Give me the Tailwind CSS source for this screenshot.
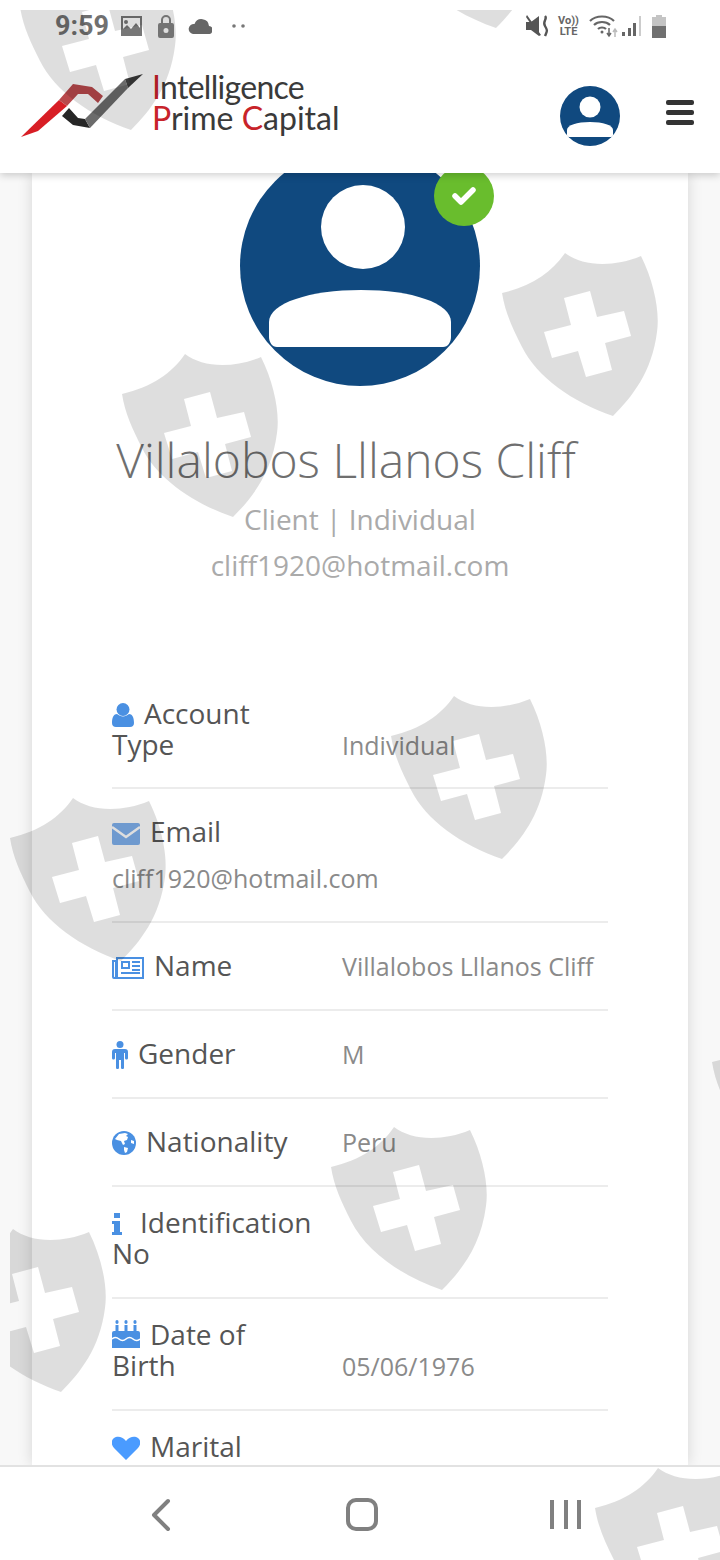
<!DOCTYPE html>
<html lang="en">
  <head>
    <meta charset="UTF-8" />
    <meta name="viewport" content="width=device-width, initial-scale=1.0" />
    <title>Profile</title>
    <script src="https://cdn.jsdelivr.net/npm/@tailwindcss/browser@4"></script>
  </head>
  <body class="bg-white font-['Open_Sans',sans-serif] antialiased">
    <div class="relative flex flex-col w-[720px] h-[1560px] overflow-hidden">
      <!-- Header -->
      <header class="relative z-10 h-[173px] shrink-0 bg-white shadow-[0_2px_8px_rgba(0,0,0,0.2)]">
        <!-- Status bar -->
        <div class="flex items-center h-[52px] pl-[55px] pr-[54px] text-[#707070]">
          <span class="w-[52px] text-[27px] font-bold font-['Roboto',sans-serif] leading-none">9:59</span>
          <svg class="ml-[14px]" width="21" height="20" viewBox="0 0 21 20" fill="#777777"><path fill-rule="evenodd" d="M0 0h21v20H0zM2 2v11l4-4 4 4 5-6 4 5V2zM5 4a2 2 0 1 1 0 4 2 2 0 0 1 0-4z"/></svg>
          <svg class="ml-[16px]" width="16" height="23" viewBox="0 0 16 23" fill="#858585"><path fill-rule="evenodd" d="M3 8V5a5 5 0 0 1 10 0v3h1a2 2 0 0 1 2 2v11a2 2 0 0 1-2 2H2a2 2 0 0 1-2-2V10a2 2 0 0 1 2-2zm2 0h6V5a3 3 0 0 0-6 0zm3 5a2.500 2.500 0 1 0 0 5 2.500 2.500 0 0 0 0-5z"/></svg>
          <svg class="ml-[14px]" width="24" height="15" viewBox="0 0 24 15" fill="#666666"><path d="M5 15h15a4 4 0 0 0 1-8A7.500 7.500 0 0 0 6.500 5 5 5 0 0 0 5 15z"/></svg>
          <svg class="ml-[20px]" width="13" height="4" viewBox="0 0 13 4" fill="#777777"><circle cx="2" cy="2" r="1.800"/><circle cx="11" cy="2" r="1.800"/></svg>
          <div class="ml-auto flex items-center">
            <svg width="24" height="24" viewBox="0 0 24 24" fill="#555555"><path d="M0 8h5l8-6v20l-8-6H0zM1 1l14 20-2 1L0 3z"/><path d="M19 2c3 3-3 5 0 10s2 5 0 10" fill="none" stroke="#555555" stroke-width="2.400"/></svg>
            <div class="ml-[7px] w-[23px] text-center text-[11px] leading-[11px] font-bold font-['Roboto',sans-serif] text-[#666666]">Vo))<br />LTE</div>
            <svg class="ml-[9px]" width="29" height="24" viewBox="0 0 29 24" fill="none" stroke="#666666" stroke-width="2.200"><path d="M1 7c6-6 18-6 24 0M5 11c4-4 12-4 16 0M9 15c2-2 6-2 8 0"/><circle cx="13" cy="18" r="1.500" fill="#666666" stroke="none"/><path d="M20 14v7m-2-2l2 3 2-3" stroke-width="1.500"/><path d="M26 23v-7m-2 2l2-3 2 3" stroke="#bbbbbb" stroke-width="1.500"/></svg>
            <svg class="ml-[4px]" width="20" height="22" viewBox="0 0 20 22"><rect x="0" y="17" width="3" height="4" fill="#666666"/><rect x="6" y="13" width="3" height="8" fill="#666666"/><rect x="11" y="8" width="3" height="13" fill="#666666"/><rect x="17" y="1" width="2" height="20" fill="#cccccc"/></svg>
            <svg class="ml-[10px]" width="14" height="23" viewBox="0 0 14 23"><path d="M4 0h6v2h4v21H0V2h4z" fill="#c4c4c4"/><rect y="11" width="14" height="12" fill="#707070"/></svg>
          </div>
        </div>
        <!-- Logo row -->
        <div class="flex items-center h-[121px] pl-[20px] pr-[26px]">
          <svg class="shrink-0 -mt-[14px]" width="124" height="64" viewBox="20 73 124 64">
            <polygon points="21,136 59,99 67,105 38,130" fill="#d81e25" />
            <polygon points="59,99 73,83 92,86 103,95 98,102 88,93 78,93 67,105" fill="#b9494c" />
            <polygon points="62,115 69,107 78,117 85,118 90,127 73,124" fill="#262626" />
            <polygon points="85,118 125,78 128,87 90,127" fill="#6b6b6b" />
            <polygon points="125,78 143,73 128,87" fill="#3a3a3a" />
          </svg>
          <div class="ml-[8px] -mt-[22px] text-[32px] leading-[31px] font-normal font-['Lato',sans-serif] text-[#3a3a3a]">
            <div class="tracking-[-0.7px]"><span class="text-[#c8232a]">I</span>ntelligence</div>
            <div class="tracking-[0px]"><span class="text-[#c8232a]">P</span>rime <span class="text-[#c8232a]">C</span>apital</div>
          </div>
          <svg class="ml-auto mt-[7px]" width="60" height="60" viewBox="0 0 60 60">
            <circle cx="30" cy="30" r="30" fill="#10497f" />
            <circle cx="30" cy="21" r="10.500" fill="#ffffff" />
            <path d="M7 44c0-5 10-8 23-8s23 3 23 8v5c0 1-1 2-2 2H9c-1 0-2-1-2-2z" fill="#ffffff" />
          </svg>
          <div class="ml-[46px] flex flex-col gap-[5px]">
            <div class="w-[28px] h-[5px] rounded-[2px] bg-[#333333]"></div>
            <div class="w-[28px] h-[5px] rounded-[2px] bg-[#333333]"></div>
            <div class="w-[28px] h-[5px] rounded-[2px] bg-[#333333]"></div>
          </div>
        </div>
      </header>

      <!-- Main -->
      <main class="flex-1 overflow-hidden bg-[#f8f8f8] px-[32px]">
        <div class="flow-root bg-white h-full shadow-[0_0_14px_rgba(0,0,0,0.14)] relative">
          <!-- Avatar -->
          <div class="relative mx-auto -mt-[27px] w-[240px] h-[240px]">
            <svg width="240" height="240" viewBox="0 0 240 240">
              <circle cx="120" cy="120" r="120" fill="#10497f" />
              <ellipse cx="123" cy="81" rx="42" ry="42" fill="#ffffff" />
              <path d="M29 176c0-19 41-32 92-32s90 13 90 32v15c0 5-3 10-8 10H37c-5 0-8-5-8-10z" fill="#ffffff" />
            </svg>
            <div class="absolute left-[194px] top-[20px] flex items-center justify-center w-[60px] h-[60px] rounded-full bg-[#69bd2d]">
              <svg width="24" height="20" viewBox="0 0 24 20" fill="none" stroke="#ffffff" stroke-width="5.500" stroke-linecap="round" stroke-linejoin="round"><path d="M3 10l6 6L21 4" /></svg>
            </div>
          </div>

          <!-- Name block -->
          <h1 class="mt-[44px] pr-[28px] text-center text-[48px] leading-[60px] font-light text-[#6f6f6f]">Villalobos Lllanos Cliff</h1>
          <p class="mt-[11px] text-center text-[28px] leading-[37px] text-[#aaaaaa]">Client | Individual</p>
          <p class="mt-[9px] text-center text-[28px] leading-[37px] text-[#aaaaaa]">cliff1920@hotmail.com</p>

          <!-- Details -->
          <div class="mx-[80px] mt-[93px] text-[28px] leading-[31px] text-[#555555]">
            <div class="flex h-[112px] pt-[21px] border-b-2 border-[#ececec]">
              <div class="w-[230px]">
                <svg class="inline-block align-[-3px] mr-[10px]" width="22" height="24" viewBox="0 0 22 24" fill="#4a90e2"><circle cx="11" cy="6.500" r="6.500"/><path d="M0 20c0-6 2-9 5-9 2 1.500 4 2.500 6 2.500s4-1 6-2.500c3 0 5 3 5 9 0 2.500-1.500 4-4 4H4c-2.500 0-4-1.500-4-4z"/></svg>Account<br />Type
              </div>
              <div class="pt-[32px] text-[25px] text-[#8a8a8a]">Individual</div>
            </div>

            <div class="h-[134px] pt-[27px] border-b-2 border-[#ececec]">
              <div>
                <svg class="inline-block align-[-3px] mr-[10px]" width="28" height="22" viewBox="0 0 28 22"><rect width="28" height="22" rx="2" fill="#80b1ee"/><path d="M0 4l14 10L28 4" fill="none" stroke="#ffffff" stroke-width="2.500"/></svg>Email
              </div>
              <div class="mt-[16px] text-[25px] text-[#8a8a8a]">cliff1920@hotmail.com</div>
            </div>

            <div class="flex h-[88px] pt-[27px] border-b-2 border-[#ececec]">
              <div class="w-[230px]">
                <svg class="inline-block align-[-3px] mr-[10px]" width="32" height="22" viewBox="0 0 32 22" fill="#4a90e2"><path fill-rule="evenodd" d="M4 0h28v22H2a2 2 0 0 1-2-2V3h4zM6 2v18h24V2zM2 5v14.500a.5.5 0 0 0 1 0V5z"/><path fill-rule="evenodd" d="M9 4h9v8H9zm2 2v4h5V6z"/><path d="M20 4h8v2h-8zM20 8h8v2h-8zM20 12h8v2h-8zM9 15h19v2H9z"/></svg>Name
              </div>
              <div class="pt-[1px] text-[25px] text-[#8a8a8a]">Villalobos Lllanos Cliff</div>
            </div>

            <div class="flex h-[88px] pt-[27px] border-b-2 border-[#ececec]">
              <div class="w-[230px]">
                <svg class="inline-block align-[-5px] mr-[10px]" width="16" height="28" viewBox="0 0 16 28" fill="#4a90e2"><circle cx="8" cy="3.500" r="3.500"/><path d="M3 8h10c2 0 3 1 3 3v6c0 2-3 2-3 0v-5h-1v15c0 1.500-3 1.500-3 0v-8H7v8c0 1.500-3 1.500-3 0V12H3v5c0 2-3 2-3 0v-6c0-2 1-3 3-3z"/></svg>Gender
              </div>
              <div class="pt-[1px] text-[25px] text-[#8a8a8a]">M</div>
            </div>

            <div class="flex h-[88px] pt-[27px] border-b-2 border-[#ececec]">
              <div class="w-[230px]">
                <svg class="inline-block align-[-3px] mr-[10px]" width="24" height="24" viewBox="0 0 24 24"><circle cx="12" cy="12" r="12" fill="#4a90e2"/><path d="M3 8l4-5 6-1 3 1-2 2 2 1-1 3-3 1 1 3-2 1-2-4-4-1z" fill="#ffffff"/><path d="M12 16l4 1-1 4-2 1-1-3zM19 9l3 1 0 3-3-1z" fill="#ffffff"/></svg>Nationality
              </div>
              <div class="pt-[1px] text-[25px] text-[#8a8a8a]">Peru</div>
            </div>

            <div class="flex h-[112px] pt-[20px] border-b-2 border-[#ececec]">
              <div class="w-[230px]">
                <svg class="inline-block align-[-2px] mr-[18px]" width="10" height="22" viewBox="0 0 10 22" fill="#4a90e2"><rect x="2" y="0" width="6" height="5"/><path d="M0 8h8v11h2v3H0v-3h2v-8H0z"/></svg>Identification<br />No
              </div>
            </div>

            <div class="flex h-[112px] pt-[20px] border-b-2 border-[#ececec]">
              <div class="w-[230px]">
                <svg class="inline-block align-[-3px] mr-[10px]" width="28" height="28" viewBox="0 0 28 28" fill="#4a90e2"><path d="M3.500 5h3v7h-3zM12.500 5h3v7h-3zM21.500 5h3v7h-3z"/><ellipse cx="5" cy="2" rx="1.600" ry="2"/><ellipse cx="14" cy="2" rx="1.600" ry="2"/><ellipse cx="23" cy="2" rx="1.600" ry="2"/><path d="M2 11h24a2 2 0 0 1 2 2v15H0V13a2 2 0 0 1 2-2z"/><path d="M0 19c2.300-2 4.700-2 7 0s4.700 2 7 0 4.700-2 7 0 4.700 2 7 0" fill="none" stroke="#ffffff" stroke-width="1.600"/></svg>Date of<br />Birth
              </div>
              <div class="pt-[32px] text-[25px] text-[#8a8a8a]">05/06/1976</div>
            </div>

            <div class="h-[60px] pt-[20px]">
              <svg class="inline-block align-[-3px] mr-[10px]" width="28" height="24" viewBox="0 0 28 24" fill="#4a9bff"><path d="M14 24L2 12C-1 9-1 4 2 2s8-2 12 3c4-5 9-5 12-3s3 7 0 10z"/></svg>Marital
            </div>
          </div>
        </div>
      </main>

      <!-- Bottom nav -->
      <nav class="relative z-10 flex h-[95px] shrink-0 items-center bg-white border-t-2 border-[#e2e2e2]">
        <svg class="absolute left-[150px] top-[31px]" width="22" height="34" viewBox="0 0 22 34" fill="none" stroke="#808080" stroke-width="4" stroke-linecap="round" stroke-linejoin="round"><path d="M18 3L4 17l14 14" /></svg>
        <div class="absolute left-[346px] top-[31px] w-[32px] h-[33px] rounded-[10px] border-[4px] border-[#808080]"></div>
        <div class="absolute left-[550px] top-[33px] flex gap-[9.500px]">
          <div class="w-[4px] h-[29px] bg-[#808080]"></div>
          <div class="w-[4px] h-[29px] bg-[#808080]"></div>
          <div class="w-[4px] h-[29px] bg-[#808080]"></div>
        </div>
      </nav>

      <!-- Watermark shields, laid over the whole screen -->
      <svg class="absolute left-[10px] top-[10px] z-20 pointer-events-none" width="710" height="1550" viewBox="10 10 710 1550">
        <defs>
          <path id="shield" fill-rule="evenodd" d="M63 1C50 20 30 34 0 41C3 60 10 75 20 95C35 125 70 150 111 164C130 145 150 120 155 80C158 60 152 30 139 4C110 16 80 14 63 1ZM62 46L88 39L95 65L122 59L129 84L103 91L110 118L84 125L76 99L50 106L42 80L69 73Z" />
        </defs>
        <g fill="#000000" fill-opacity="0.13">
          <use href="#shield" x="20" y="-34" />
          <use href="#shield" x="385" y="-136" />
          <use href="#shield" x="502" y="252" />
          <use href="#shield" x="122" y="353" />
          <use href="#shield" x="391" y="695" />
          <use href="#shield" x="10" y="797" />
          <use href="#shield" x="331" y="1126" />
          <use href="#shield" x="-50" y="1228" />
          <use href="#shield" x="712" y="1021" />
          <use href="#shield" x="595" y="1467" />
        </g>
      </svg>
    </div>
  </body>
</html>
